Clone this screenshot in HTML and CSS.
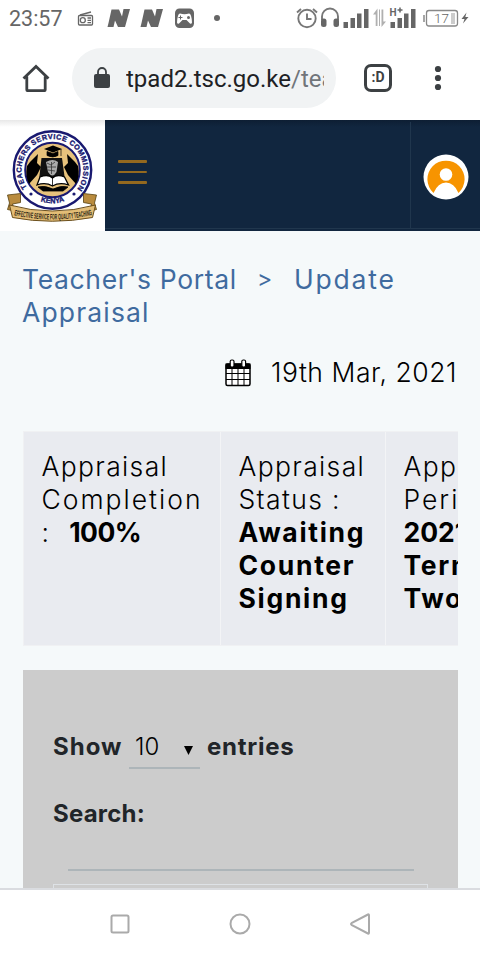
FILE: index.html
```html
<!DOCTYPE html>
<html lang="en">
<head>
    <meta charset="UTF-8" />
    <meta name="viewport" content="width=device-width, initial-scale=1.0" />
    <title>Teacher's Portal - Update Appraisal</title>
    <link rel="stylesheet" href="styles.css">
</head>
<body>
    <div class="screen">
        <div class="status-bar">
            <span class="clock">23:57</span>
            <svg class="status-left" width="150" height="38" viewBox="75 0 150 38">
                <g fill="none" stroke="#666" stroke-width="1.3">
                    <rect x="78.5" y="15.5" width="14" height="9.5" rx="1" />
                    <path d="M80 15 L91 12" />
                    <circle cx="82.8" cy="20.2" r="2.5" />
                    <path d="M87.5 18h3.5M87.5 20.3h3.5M87.5 22.6h3.5" />
                </g>
                <path id="n" fill="#666" d="M111.500 9.500h7.500l3 7 1.500-7.500h6.500l-5 18h-7l-3-6.500-1.500 6.500h-6l1-4z" />
                <use href="#n" x="33" />
                <rect x="175" y="8.500" width="19" height="19.500" rx="4.500" fill="#666" />
                <path fill="#fff" d="M180 13.500q4.500 1.500 9 0q2.500 0 3 9q-.5 2-2 1l-3.500-3.500h-4l-3.500 3.500q-1.500 1-2-1q.5-9 3-9z" />
                <path d="M180.500 15.500v4M178.500 17.500h4" stroke="#666" stroke-width="1" />
                <circle cx="188.500" cy="17.500" r="1.500" fill="#666" />
                <circle cx="217" cy="18" r="3" fill="#666" />
            </svg>
            <svg class="status-right" width="185" height="38" viewBox="295 0 185 38">
                <g fill="none" stroke="#777" stroke-width="1.900">
                    <circle cx="307" cy="18.500" r="8.700" />
                    <path d="M307 13.500v5.500h4.500M297 12.500l4-3.500M313 9l4 3.500" />
                    <path d="M322 20v-3.500a8 8 0 0 1 16 0V20" />
                </g>
                <rect x="321" y="18.500" width="5.500" height="8.500" rx="2.500" fill="#666" />
                <rect x="333.500" y="18.500" width="5.500" height="8.500" rx="2.500" fill="#666" />
                <g fill="#666">
                    <path d="M343.500 22h4.500v6h-4.500zM350.500 18h4.500v10h-4.500zM357 13.500h4.500V28H357zM364 9h4.500v19H364z" />
                    <path d="M390.500 22h4.500v6h-4.500zM397.500 18h4.500v10h-4.500zM404 13.500h4.500V28H404zM411 9h4.500v19H411z" />
                </g>
                <path fill="#b0b0b0" d="M373 14.500l4.500-6V26h-1.800V14.500zM379 26V9.500h1V26zM381.500 9.500h1.800V21.500h2.700l-4.500 5.500z" />
                <text x="389.500" y="15.500" class="net">H</text>
                <path d="M400 7.500v5M397.500 10h5" stroke="#666" stroke-width="1.500" />
                <rect x="426.500" y="10.500" width="31" height="15.500" rx="2.500" fill="none" stroke="#888" stroke-width="1.300" />
                <path d="M424 15v7" stroke="#888" stroke-width="1.500" />
                <rect x="451" y="13" width="4" height="11" fill="#ccc" />
                <text x="434" y="23" class="battery">17</text>
                <path fill="#666" d="M466.500 12.500l-5 6.500h3l-1.500 4.500 5.500-6.500h-3.200z" />
            </svg>
        </div>

        <div class="browser-bar">
            <svg class="home" width="28" height="28" viewBox="0 0 28 28" fill="none" stroke="#3c4043" stroke-width="2.800">
                <path d="M1.500 14.500L14 2.500l12.500 12M4.800 12.500v13.200q0 1 1 1h16.400q1 0 1-1V12.500" />
            </svg>
            <div class="url-bar">
                <svg width="16" height="22" viewBox="0 0 16 22">
                    <path d="M4 8V5a4 4 0 0 1 8 0v3" fill="none" stroke="#3c4043" stroke-width="1.800" />
                    <rect x="0" y="7" width="16" height="14" rx="2" fill="#3c4043" />
                </svg>
                <div class="url">tpad2.tsc.go.ke<span>/tea</span></div>
            </div>
            <div class="tabs">:D</div>
            <svg class="more" width="8" height="26" viewBox="0 0 8 26" fill="#3c4043">
                <circle cx="4" cy="4" r="3.100" />
                <circle cx="4" cy="13" r="3.100" />
                <circle cx="4" cy="22" r="3.100" />
            </svg>
        </div>

        <div class="navbar">
            <div class="logo">
                <svg width="105" height="111" viewBox="0 0 105 111">
                    <defs>
                        <path id="ring-top" d="M28.800 69.900A31 31 0 1 1 76.200 69.900" />
                        <path id="ring-bottom" d="M33 77.500Q52.500 89 72 77.500" />
                        <path id="ribbon-text" d="M11 94.500Q52 104.500 94 94.500" />
                    </defs>
                    <circle cx="52.500" cy="50" r="38.700" fill="#fff" stroke="#191970" stroke-width="2.400" />
                    <circle cx="52.500" cy="50" r="27.300" fill="#e7c27c" stroke="#191970" stroke-width="2" />
                    <text class="ring"><textPath href="#ring-top" textLength="136" startOffset="3">TEACHERS SERVICE COMMISSION</textPath></text>
                    <text class="ring"><textPath href="#ring-bottom" startOffset="50%" text-anchor="middle">KENYA</textPath></text>
                    <circle cx="31" cy="74" r="1.600" fill="#191970" />
                    <circle cx="74" cy="74" r="1.600" fill="#191970" />
                    <path d="M44 29l9-3.500 9 3.500-9 3.500z" />
                    <path d="M47 31.500v4q6 3 11 0v-4l-5 2zM61 29v7" stroke="#000" stroke-width=".7" />
                    <path d="M41.500 38h20.500l3 22H39z" fill="#111" />
                    <path d="M46 42q7-4 12 0l-1.500 10q-4 7-8.500 0z" fill="#aaa" />
                    <path d="M47 43l4 2 4-3M47 47h9M48 50l7 1M51.500 42v12" stroke="#333" stroke-width=".8" fill="none" />
                    <path d="M30 42l8-8-1 9 4 4-4 8-8 9q-4-8-2-18zM75 42l-8-8 1 9-4 4 4 8 8 9q4-8 2-18z" />
                    <path d="M37 65l3-8q8-3 12.500 1 4.500-4 12-1l4 8q-9-3-16 1-7-4-15.500-1z" fill="#fff" stroke="#000" stroke-width="1.300" />
                    <path d="M52.500 58v8M38 67q7-2 15 2 8-4 15-2l-5 4H43z" stroke="#000" stroke-width=".8" />
                    <path d="M7.500 75l13-1.500v9l-8 1.500 2 7-7-1.500 2-6.500zM96.500 75l-13-1.500v9l8 1.500-2 7 7-1.500-2-6.500z" fill="#b98b3e" stroke="#55400f" stroke-width=".8" />
                    <path d="M9.500 85Q52 97 95.500 85l-3 12.500Q52 105 12.500 97.500z" fill="#e3bd76" stroke="#6b4f1d" stroke-width="1" />
                    <text class="motto"><textPath href="#ribbon-text" startOffset="3" textLength="79" lengthAdjust="spacingAndGlyphs">EFFECTIVE SERVICE FOR QUALITY TEACHING</textPath></text>
                </svg>
            </div>
            <div class="menu-icon"><i></i><i></i><i></i></div>
            <div class="profile">
                <svg width="46" height="46" viewBox="0 0 46 46">
                    <circle cx="23" cy="23" r="22.500" fill="#fff" />
                    <path fill="#f79400" d="M10.500 39A18.600 18.600 0 1 1 35.500 39Q31 28.500 23 28.500T10.500 39z" />
                    <circle cx="23" cy="20.500" r="6.300" fill="#fff" />
                </svg>
            </div>
        </div>

        <div class="content">
            <div class="breadcrumb">
                <div class="crumb-row"><span class="crumb-portal">Teacher's Portal</span><span class="sep">&gt;</span><span class="crumb-update">Update</span></div>
                <div class="crumb-appraisal">Appraisal</div>
            </div>
            <div class="date">
                <svg width="26" height="28" viewBox="0 0 26 28">
                    <rect x="1" y="5" width="24" height="21.500" rx="1.500" fill="#fff" stroke="#000" stroke-width="1.500" />
                    <path d="M.5 4.500h25V10H.5z" />
                    <path d="M1 14.500h24M1 20.500h24M7 10v16M13 10v16M19 10v16" stroke="#000" stroke-width="1" />
                    <rect x="5.200" y="1" width="3.800" height="7" rx="1.500" fill="#fff" stroke="#000" stroke-width="1.200" />
                    <rect x="16.800" y="1" width="3.800" height="7" rx="1.500" fill="#fff" stroke="#000" stroke-width="1.200" />
                </svg>
                <span>19th Mar, 2021</span>
            </div>

            <div class="summary">
                <div class="cell completion">
                    <p>Appraisal</p>
                    <p class="wide">Completion</p>
                    <p>: <b class="percent">100%</b></p>
                </div>
                <div class="cell appraisal-status">
                    <p>Appraisal</p>
                    <p>Status :</p>
                    <b>Awaiting</b>
                    <b>Counter</b>
                    <b>Signing</b>
                </div>
                <div class="cell period">
                    <p>Appraisal</p>
                    <p class="wide">Period :</p>
                    <b class="year">2021</b>
                    <b>Term</b>
                    <b>Two</b>
                </div>
            </div>

            <div class="table-panel">
                <div class="length">
                    <span class="show">Show</span>
                    <div class="select"><span>10</span><svg width="9" height="9" viewBox="0 0 9 9"><path d="M0 0h9L4.500 9z" /></svg></div>
                    <span class="entries">entries</span>
                </div>
                <div class="search">Search:</div>
                <div class="search-input"></div>
                <div class="table"></div>
            </div>
        </div>

        <div class="nav-buttons">
            <svg width="24" height="24" viewBox="0 0 24 24"><rect x="3.500" y="3.500" width="17" height="17" rx="1.500" /></svg>
            <svg width="24" height="24" viewBox="0 0 24 24"><circle cx="12" cy="12" r="9.500" /></svg>
            <svg width="24" height="24" viewBox="0 0 24 24"><path d="M20 2.500Q21 2 21 3.500v17Q21 22 20 21.500L3.500 12.800Q2.500 12 3.500 11.200z" /></svg>
        </div>
    </div>
</body>
</html>
```

FILE: styles.css
```css
body {
    margin: 0;
    background-color: #fff;
    font-family: Inter, "Open Sans", sans-serif;
}

p {
    margin: 0;
}

svg {
    display: block;
    flex: none;
}

.screen {
    display: flex;
    flex-direction: column;
    width: 480px;
    height: 960px;
    overflow: hidden;
}

.status-bar {
    display: flex;
    height: 38px;
    flex: none;
}

.clock {
    width: 66px;
    padding-left: 9px;
    font: 21.5px/38px Roboto, sans-serif;
    color: #666;
}

.status-right {
    margin-left: auto;
}

.net {
    font: bold 10px Roboto, sans-serif;
    fill: #666;
}

.battery {
    font: 300 13.5px Roboto, sans-serif;
    fill: #666;
}

/* browser toolbar */
.browser-bar {
    display: flex;
    align-items: center;
    box-sizing: border-box;
    height: 82px;
    flex: none;
    padding: 0 0 2px 22px;
}

.url-bar {
    display: flex;
    align-items: center;
    box-sizing: border-box;
    width: 264px;
    height: 60px;
    margin-left: 22px;
    padding: 0 12px 0 22px;
    border-radius: 30px;
    background-color: #f1f3f4;
}

.url {
    margin-left: 16px;
    overflow: hidden;
    white-space: nowrap;
    font: 24px/36px Roboto, sans-serif;
    padding-top: 2px;
    color: #202124;
}

.url span {
    color: #70757a;
}

.tabs {
    box-sizing: border-box;
    width: 28px;
    height: 28px;
    margin-left: 28px;
    border: 3px solid #3c4043;
    border-radius: 7px;
    font: bold 14px/21px Roboto, sans-serif;
    color: #3c4043;
    text-align: center;
}

.more {
    margin-left: 42px;
}

/* portal header */
.navbar {
    display: flex;
    height: 111px;
    flex: none;
    background: linear-gradient(#0d1e33, #11263f 7px);
}

.logo {
    width: 105px;
    background: linear-gradient(#e8e8e8, #fff 7px);
}

.ring {
    font: bold 7.2px "Liberation Sans", sans-serif;
    fill: #191970;
    stroke: #191970;
    stroke-width: 0.35px;
}

.motto {
    font: bold 8px "Liberation Sans", sans-serif;
    fill: #2b2412;
}

.menu-icon {
    display: flex;
    flex-direction: column;
    gap: 8px;
    flex: 1;
    padding: 40px 0 0 13px;
    border-bottom: 1px solid #20364d;
    margin-bottom: 2px;
}

.menu-icon i {
    width: 29px;
    height: 2.5px;
    border-radius: 1px;
    background-color: #94691f;
}

.profile {
    box-sizing: border-box;
    width: 70px;
    margin: 2px 0;
    padding: 32px 0 0 12px;
    border-left: 1px solid #20364d;
    border-bottom: 1px solid #20364d;
}

.content {
    flex: 1;
    min-height: 0;
    overflow: hidden;
    padding: 32px 22px 0 23px;
    background-color: #f5f9fa;
    font-size: 26.5px;
    font-weight: 300;
    line-height: 33px;
    color: #000;
}

.breadcrumb {
    margin-left: -1px;
    color: #3f6b9f;
    font-weight: 400;
    white-space: nowrap;
}

.crumb-row {
    display: flex;
    height: 33px;
}

.crumb-portal {
    width: 213px;
    letter-spacing: 0.65px;
}

.sep {
    width: 37px;
    padding-left: 22px;
    font-size: 23px;
}

.crumb-update {
    letter-spacing: 1.8px;
}

.crumb-appraisal {
    letter-spacing: 1.15px;
}

.date {
    display: flex;
    justify-content: flex-end;
    align-items: center;
    gap: 20px;
    height: 33px;
    margin-top: 27px;
    letter-spacing: 0.55px;
}

.date span {
    margin-right: 1px;
}

.summary {
    display: flex;
    box-sizing: border-box;
    height: 215px;
    margin-top: 42px;
    overflow: hidden;
    border: 1px solid #f0f1f3;
    border-right: 0;
    background-color: #e9ebf0;
    letter-spacing: 1.35px;
    white-space: nowrap;
}

.cell {
    box-sizing: border-box;
    flex: none;
    padding: 18px 0 0 17.5px;
    border-right: 1px solid #f3f4f6;
}

.cell b {
    display: block;
    font-weight: 700;
    letter-spacing: 1.7px;
}

.wide {
    letter-spacing: 2px;
}

.completion {
    width: 197px;
}

.appraisal-status {
    width: 165px;
}

.period {
    width: 180px;
}

.cell .percent {
    display: inline-block;
    margin-left: 10px;
    letter-spacing: -0.5px;
}

.cell .year {
    letter-spacing: 0;
}

.table-panel {
    box-sizing: border-box;
    height: 300px;
    margin-top: 24px;
    padding: 59px 30px 0 30px;
    background-color: #ccc;
    font-size: 24px;
    font-weight: 700;
    color: #212529;
}

.length {
    display: flex;
    height: 41px;
    line-height: 35px;
}

.show {
    width: 69px;
    letter-spacing: 1px;
}

.entries {
    letter-spacing: 0.75px;
}

.select {
    display: flex;
    justify-content: space-between;
    align-items: center;
    box-sizing: border-box;
    width: 71px;
    height: 41px;
    margin: -1px 7px 0 7px;
    padding: 1px 7px 3px 6px;
    border-bottom: 2px solid #adb5b9;
    font-weight: 300;
    color: #000;
}

.select svg {
    margin-top: 8px;
}

.search {
    margin-top: 27px;
    line-height: 33px;
    letter-spacing: 0.2px;
}

.search-input {
    height: 37px;
    margin: 2px 14px 0 15px;
    border-bottom: 2px solid #adb5b9;
}

.table {
    height: 60px;
    margin-top: 13px;
    border: 1px solid #dee2e6;
}

.nav-buttons {
    display: flex;
    justify-content: center;
    align-items: center;
    gap: 96px;
    box-sizing: border-box;
    height: 72px;
    flex: none;
    padding-bottom: 2px;
    border-top: 2px solid #dadce0;
    background-color: #fff;
}

.nav-buttons svg {
    fill: none;
    stroke: #aaa;
    stroke-width: 2;
}
```
